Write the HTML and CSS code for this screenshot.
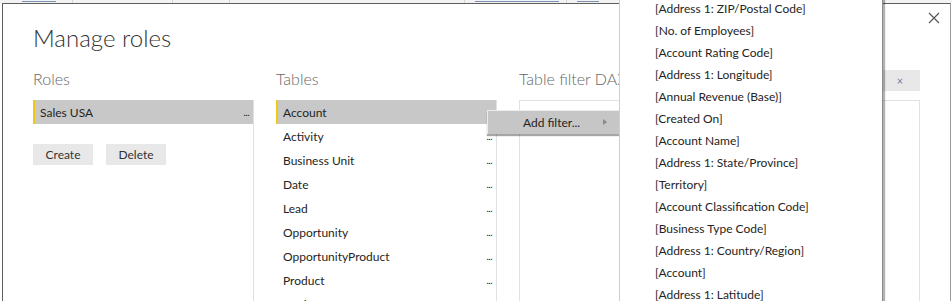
FILE: index.html
```html
<!DOCTYPE html>
<html>
<head>
<meta charset="utf-8">
<link rel="stylesheet" href="styles.css">
</head>
<body>
<div class="ribbon">
  <span class="rb w70"><i class="mark m1"></i></span>
  <span class="rb w100"><i class="mark m2"></i><i class="mark m3"></i></span>
  <span class="rb w57"><i class="mark m4"></i></span>
  <span class="rb w235"></span>
  <span class="rb w102"><i class="mark m5"></i></span>
  <span class="rb w60"><i class="mark m6"></i></span>
</div>
<div class="dialog">
  <div class="close" aria-label="Close">
    <svg width="12" height="12" viewBox="0 0 12 12"><path d="M1 1 L11 11 M11 1 L1 11" stroke="#555" stroke-width="1.2" fill="none"/></svg>
  </div>
  <h1 class="title">Manage roles</h1>
  <div class="columns">
    <section class="col col-roles">
      <h2 class="heading">Roles</h2>
      <div class="list">
        <div class="row selected"><span>Sales USA</span><span class="dots">...</span></div>
        <div class="buttons">
          <button class="btn">Create</button>
          <button class="btn">Delete</button>
        </div>
      </div>
    </section>
    <section class="col col-tables">
      <h2 class="heading">Tables</h2>
      <div class="list">
        <div class="row selected"><span>Account</span><span class="dots">...</span></div>
        <div class="row"><span>Activity</span><span class="dots">...</span></div>
        <div class="row"><span>Business Unit</span><span class="dots">...</span></div>
        <div class="row"><span>Date</span><span class="dots">...</span></div>
        <div class="row"><span>Lead</span><span class="dots">...</span></div>
        <div class="row"><span>Opportunity</span><span class="dots">...</span></div>
        <div class="row"><span>OpportunityProduct</span><span class="dots">...</span></div>
        <div class="row"><span>Product</span><span class="dots">...</span></div>
        <div class="row"><span>Territory</span><span class="dots">...</span></div>
      </div>
    </section>
    <section class="col col-filter">
      <div class="filter-head">
        <h2 class="heading">Table filter DAX Expression</h2>
        <div class="fx-bar"><span class="fx-btn check">✓</span><span class="fx-btn cross">×</span></div>
      </div>
      <div class="filter-box"></div>
    </section>
  </div>
</div>

<div class="context-menu">
  <div class="cm-item"><span>Add filter...</span><span class="cm-arrow"></span></div>
</div>

<div class="dropdown">
  <div class="dd-item">[Address 1: ZIP/Postal Code]</div>
  <div class="dd-item">[No. of Employees]</div>
  <div class="dd-item">[Account Rating Code]</div>
  <div class="dd-item">[Address 1: Longitude]</div>
  <div class="dd-item">[Annual Revenue (Base)]</div>
  <div class="dd-item">[Created On]</div>
  <div class="dd-item">[Account Name]</div>
  <div class="dd-item">[Address 1: State/Province]</div>
  <div class="dd-item">[Territory]</div>
  <div class="dd-item">[Account Classification Code]</div>
  <div class="dd-item">[Business Type Code]</div>
  <div class="dd-item">[Address 1: Country/Region]</div>
  <div class="dd-item">[Account]</div>
  <div class="dd-item">[Address 1: Latitude]</div>
</div>
</body>
</html>
```

FILE: styles.css
```css
* { box-sizing: border-box; }
html, body {
  margin: 0;
  padding: 0;
  width: 952px;
  height: 301px;
  overflow: hidden;
  background: #ffffff;
  font-family: Lato, "Noto Sans", "Liberation Sans", sans-serif;
  color: #252423;
  position: relative;
}
.ribbon {
  display: flex;
  height: 3px;
  overflow: hidden;
  background: #f3f3f3;
}
.rb {
  display: flex;
  gap: 6px;
  height: 3px;
  border-right: 1px solid #d6d6d6;
  padding-left: 10px;
}
.mark {
  display: block;
  height: 1px;
  margin-top: 1px;
  background: #7d8fb0;
}
.m1 { width: 34px; margin-left: 12px; }
.m2 { width: 6px; margin-left: 74px; }
.m3 { width: 8px; margin-left: 18px; }
.m4 { width: 3px; margin-left: 260px; }
.m5 { width: 84px; }
.m6 { width: 22px; }
.w70 { width: 73px; }
.w100 { width: 100px; }
.w57 { width: 57px; }
.w235 { width: 235px; }
.w102 { width: 102px; }
.w60 { width: 60px; }

.dialog {
  position: relative;
  margin-left: 2px;
  width: 949px;
  height: 298px;
  border-top: 1px solid #5e5e5e;
  border-left: 1px solid #5e5e5e;
  border-right: 1px solid #9a9a9a;
  background: #fff;
  padding: 0 0 0 30px;
}
.close {
  position: absolute;
  right: 10px;
  top: 8px;
  width: 12px;
  height: 12px;
  display: flex;
}
.title {
  margin: 0;
  padding-top: 18px;
  font-size: 24px;
  line-height: 32px;
  font-weight: 300;
  color: #333;
  height: 66px;
}
.columns {
  display: flex;
  gap: 22px;
  height: 232px;
}
.col { display: flex; flex-direction: column; }
.col-roles, .col-tables { width: 221px; }
.col-filter { width: 401px; }
.heading {
  flex-shrink: 0;
  margin: 0;
  height: 30px;
  font-size: 16px;
  line-height: 18px;
  font-weight: 300;
  color: #666;
  white-space: nowrap;
}
.list {
  flex: 1;
  min-height: 0;
  border-right: 1px solid #e1e1e1;
}
.row {
  display: flex;
  justify-content: space-between;
  align-items: center;
  height: 24px;
  padding: 0 4px 0 7px;
  font-size: 12px;
  color: #252423;
}
.row.selected {
  background: #c8c8c8;
  border-left: 2px solid #f2c811;
  padding-left: 5px;
}
.dots { font-size: 10px; letter-spacing: -0.5px; }
.buttons {
  display: flex;
  gap: 13px;
  margin-top: 20px;
}
.btn {
  width: 60px;
  height: 21px;
  border: none;
  background: #e8e8e8;
  font-family: inherit;
  font-size: 12px;
  color: #333;
  padding: 0;
}
.filter-head {
  flex-shrink: 0;
  display: flex;
  justify-content: space-between;
  height: 30px;
}
.fx-bar {
  display: flex;
  height: 21px;
  width: 80px;
  background: #e8e8e8;
}
.fx-btn {
  flex: 1;
  display: flex;
  align-items: center;
  justify-content: center;
  font-size: 11px;
  color: #6d7aa0;
}
.filter-box {
  flex: 1;
  border: 1px solid #e1e1e1;
  border-bottom: none;
}

.context-menu {
  position: absolute;
  left: 487px;
  top: 110px;
  width: 140px;
  height: 24px;
  background: #c6c6c6;
  border-top: 1px solid #ececec;
  border-left: 1px solid #ececec;
  box-shadow: 0 2px 1px rgba(0,0,0,0.35);
}
.cm-item {
  display: flex;
  align-items: center;
  height: 22px;
  padding-left: 35px;
  font-size: 12px;
  color: #252423;
}
.cm-arrow {
  margin-left: 23px;
  width: 0;
  height: 0;
  border-left: 4px solid #8a8a8a;
  border-top: 3px solid transparent;
  border-bottom: 3px solid transparent;
}

.dropdown {
  position: absolute;
  left: 619px;
  top: -2px;
  width: 264px;
  height: 310px;
  background: #fff;
  border-left: 1px solid #cfcfcf;
  border-right: 1px solid #8c8c8c;
  box-shadow: 2px 0 1px rgba(0,0,0,0.3);
  padding-left: 35px;
}
.dd-item {
  height: 22px;
  line-height: 22px;
  font-size: 12px;
  color: #252423;
  white-space: nowrap;
}
```
